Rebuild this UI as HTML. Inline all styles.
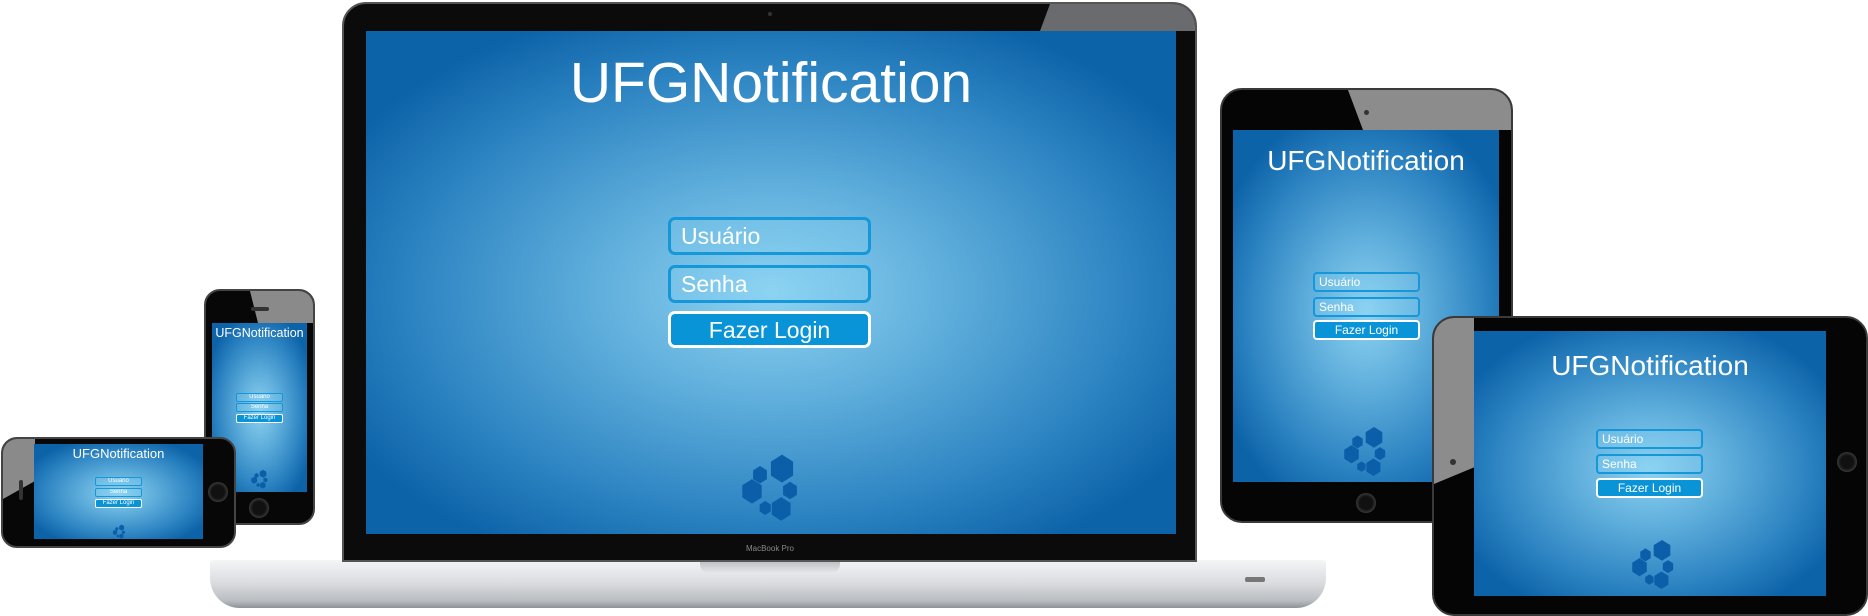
<!DOCTYPE html>
<html><head><meta charset="utf-8"><style>
*{margin:0;padding:0;box-sizing:border-box}
body{width:1868px;height:610px;background:#fff;position:relative;overflow:hidden;font-family:"Liberation Sans",sans-serif}
.a{position:absolute}
.scr{position:absolute;overflow:hidden;background:radial-gradient(ellipse 60% 60% at 50% 52%,#8dd3f2 0%,#5aaad9 40%,#2f86c3 72%,#0d63a8 100%)}
.t{position:absolute;left:0;right:0;text-align:center;color:#fff;white-space:nowrap}
.in{position:absolute;border:solid #1597d8;color:#fff;background:rgba(140,210,245,.25);white-space:nowrap;overflow:hidden}
.bt{position:absolute;border:solid #fff;background:#0a94d8;color:#fff;text-align:center;white-space:nowrap;overflow:hidden}
svg.logo{position:absolute}
</style></head><body>
<svg width="0" height="0" style="position:absolute"><defs>
<polygon id="h" points="0,-1 0.866,-0.5 0.866,0.5 0,1 -0.866,0.5 -0.866,-0.5" fill="#0b5ea8"/>
<g id="lg"><use href="#h" transform="translate(110,38) scale(32)"/><use href="#h" transform="translate(55,52) scale(20)"/><use href="#h" transform="translate(35,90) scale(28)"/><use href="#h" transform="translate(130,88) scale(20)"/><use href="#h" transform="translate(68,128) scale(16)"/><use href="#h" transform="translate(108,130) scale(27)"/></g>
</defs></svg>

<!-- Laptop -->
<div class="a" style="left:210px;top:560px;width:1116px;height:48px;border-radius:4px 4px 30px 30px;background:linear-gradient(#f4f5f7,#d9dbde 50%,#b9bcc0 85%,#8e9195);"></div>
<div class="a" style="left:700px;top:562px;width:140px;height:12px;border-radius:0 0 10px 10px;background:linear-gradient(#bfc2c6,#e9eaec);"></div>
<div class="a" style="left:1245px;top:577px;width:20px;height:5px;background:#777;border-radius:2px"></div>
<div class="a" style="left:342px;top:2px;width:855px;height:560px;border-radius:24px 24px 0 0;background:#0b0b0b;border:2px solid #555"></div>
<div class="a" style="left:1040px;top:4px;width:155px;height:27px;background:#6a6b6f;clip-path:polygon(10px 0,100% 0,100% 100%,0 100%);border-top-right-radius:22px"></div>
<div class="a" style="left:768px;top:12px;width:4px;height:4px;border-radius:50%;background:#333"></div>
<div class="a" style="left:730px;top:544px;width:80px;text-align:center;color:#888;font-size:8px">MacBook Pro</div>
<div class="scr" style="left:366px;top:31px;width:810px;height:503px">
 <div class="t" style="top:19px;font-size:57px">UFGNotification</div>
 <div class="in" style="left:302px;top:186px;width:203px;height:38px;border-width:3px;border-radius:7px;font-size:23px;padding:3px 10px">Usuário</div>
 <div class="in" style="left:302px;top:234px;width:203px;height:38px;border-width:3px;border-radius:7px;font-size:23px;padding:3px 10px">Senha</div>
 <div class="bt" style="left:302px;top:280px;width:203px;height:37px;border-width:3px;border-radius:7px;font-size:23px;padding-top:3px">Fazer Login</div>
 <svg class="logo" style="left:372px;top:421px" width="64" height="70" viewBox="0 0 160 160" preserveAspectRatio="none"><use href="#lg"/></svg>
</div>

<!-- iPad portrait -->
<div class="a" style="left:1220px;top:88px;width:293px;height:435px;border-radius:22px;background:#050505;border:2px solid #3a3a3a"></div>
<div class="a" style="left:1348px;top:90px;width:163px;height:40px;background:#8c8c8c;clip-path:polygon(0 0,100% 0,100% 100%,15px 100%);border-top-right-radius:20px"></div>
<div class="a" style="left:1364px;top:110px;width:5px;height:5px;border-radius:50%;background:#333"></div>
<div class="a" style="left:1356px;top:493px;width:20px;height:20px;border-radius:50%;background:radial-gradient(#111 45%,#666)"></div>
<div class="scr" style="left:1233px;top:130px;width:266px;height:352px">
 <div class="t" style="top:15px;font-size:28px">UFGNotification</div>
 <div class="in" style="left:80px;top:142px;width:107px;height:20px;border-width:2px;border-radius:4px;font-size:12px;padding:1px 4px">Usuário</div>
 <div class="in" style="left:80px;top:167px;width:107px;height:20px;border-width:2px;border-radius:4px;font-size:12px;padding:1px 4px">Senha</div>
 <div class="bt" style="left:80px;top:190px;width:107px;height:20px;border-width:2px;border-radius:4px;font-size:12px;padding-top:1px">Fazer Login</div>
 <svg class="logo" style="left:108px;top:295px" width="48" height="52" viewBox="0 0 160 160" preserveAspectRatio="none"><use href="#lg"/></svg>
</div>

<!-- iPad landscape -->
<div class="a" style="left:1432px;top:316px;width:436px;height:300px;border-radius:22px;background:#050505;border:2px solid #3a3a3a"></div>
<div class="a" style="left:1434px;top:318px;width:40px;height:166px;background:#8c8c8c;clip-path:polygon(0 0,100% 0,100% 90%,0 100%);border-top-left-radius:20px"></div>
<div class="a" style="left:1450px;top:459px;width:6px;height:6px;border-radius:50%;background:#333"></div>
<div class="a" style="left:1837px;top:452px;width:20px;height:20px;border-radius:50%;background:radial-gradient(#111 45%,#666)"></div>
<div class="scr" style="left:1474px;top:331px;width:352px;height:265px">
 <div class="t" style="top:19px;font-size:28px">UFGNotification</div>
 <div class="in" style="left:122px;top:98px;width:107px;height:20px;border-width:2px;border-radius:4px;font-size:12px;padding:1px 4px">Usuário</div>
 <div class="in" style="left:122px;top:123px;width:107px;height:20px;border-width:2px;border-radius:4px;font-size:12px;padding:1px 4px">Senha</div>
 <div class="bt" style="left:122px;top:147px;width:107px;height:20px;border-width:2px;border-radius:4px;font-size:12px;padding-top:1px">Fazer Login</div>
 <svg class="logo" style="left:155px;top:207px" width="48" height="52" viewBox="0 0 160 160" preserveAspectRatio="none"><use href="#lg"/></svg>
</div>

<!-- iPhone portrait -->
<div class="a" style="left:204px;top:289px;width:111px;height:236px;border-radius:16px;background:#070707;border:2px solid #444"></div>
<div class="a" style="left:250px;top:291px;width:63px;height:32px;background:#8a8a8a;clip-path:polygon(0 0,100% 0,100% 100%,8px 100%);border-top-right-radius:14px"></div>
<div class="a" style="left:251px;top:307px;width:18px;height:4px;border-radius:2px;background:#333"></div>
<div class="a" style="left:249px;top:498px;width:20px;height:20px;border-radius:50%;background:radial-gradient(#111 45%,#666)"></div>
<div class="scr" style="left:212px;top:323px;width:95px;height:169px">
 <div class="t" style="top:3px;font-size:12.5px">UFGNotification</div>
 <div class="in" style="left:24px;top:70px;width:47px;height:9px;border-width:1px;border-radius:2px;font-size:6px;text-align:center;line-height:7px">Usuário</div>
 <div class="in" style="left:24px;top:80px;width:47px;height:9px;border-width:1px;border-radius:2px;font-size:6px;text-align:center;line-height:7px">Senha</div>
 <div class="bt" style="left:24px;top:91px;width:47px;height:9px;border-width:1px;border-radius:2px;font-size:6px;line-height:7px">Fazer Login</div>
 <svg class="logo" style="left:38px;top:146px" width="19" height="20" viewBox="0 0 160 160" preserveAspectRatio="none"><use href="#lg"/></svg>
</div>

<!-- iPhone landscape -->
<div class="a" style="left:1px;top:437px;width:235px;height:111px;border-radius:16px;background:#070707;border:2px solid #444"></div>
<div class="a" style="left:3px;top:439px;width:32px;height:60px;background:#8a8a8a;clip-path:polygon(0 0,100% 0,100% 70%,0 100%);border-top-left-radius:14px"></div>
<div class="a" style="left:19px;top:480px;width:4px;height:20px;border-radius:2px;background:#333"></div>
<div class="a" style="left:208px;top:482px;width:20px;height:20px;border-radius:50%;background:radial-gradient(#111 45%,#666)"></div>
<div class="scr" style="left:34px;top:444px;width:169px;height:95px">
 <div class="t" style="top:2px;font-size:13px">UFGNotification</div>
 <div class="in" style="left:61px;top:33px;width:47px;height:9px;border-width:1px;border-radius:2px;font-size:6px;text-align:center;line-height:7px">Usuário</div>
 <div class="in" style="left:61px;top:44px;width:47px;height:9px;border-width:1px;border-radius:2px;font-size:6px;text-align:center;line-height:7px">Senha</div>
 <div class="bt" style="left:61px;top:55px;width:47px;height:9px;border-width:1px;border-radius:2px;font-size:6px;line-height:7px">Fazer Login</div>
 <svg class="logo" style="left:78px;top:80px" width="14" height="15" viewBox="0 0 160 160" preserveAspectRatio="none"><use href="#lg"/></svg>
</div>
</body></html>
